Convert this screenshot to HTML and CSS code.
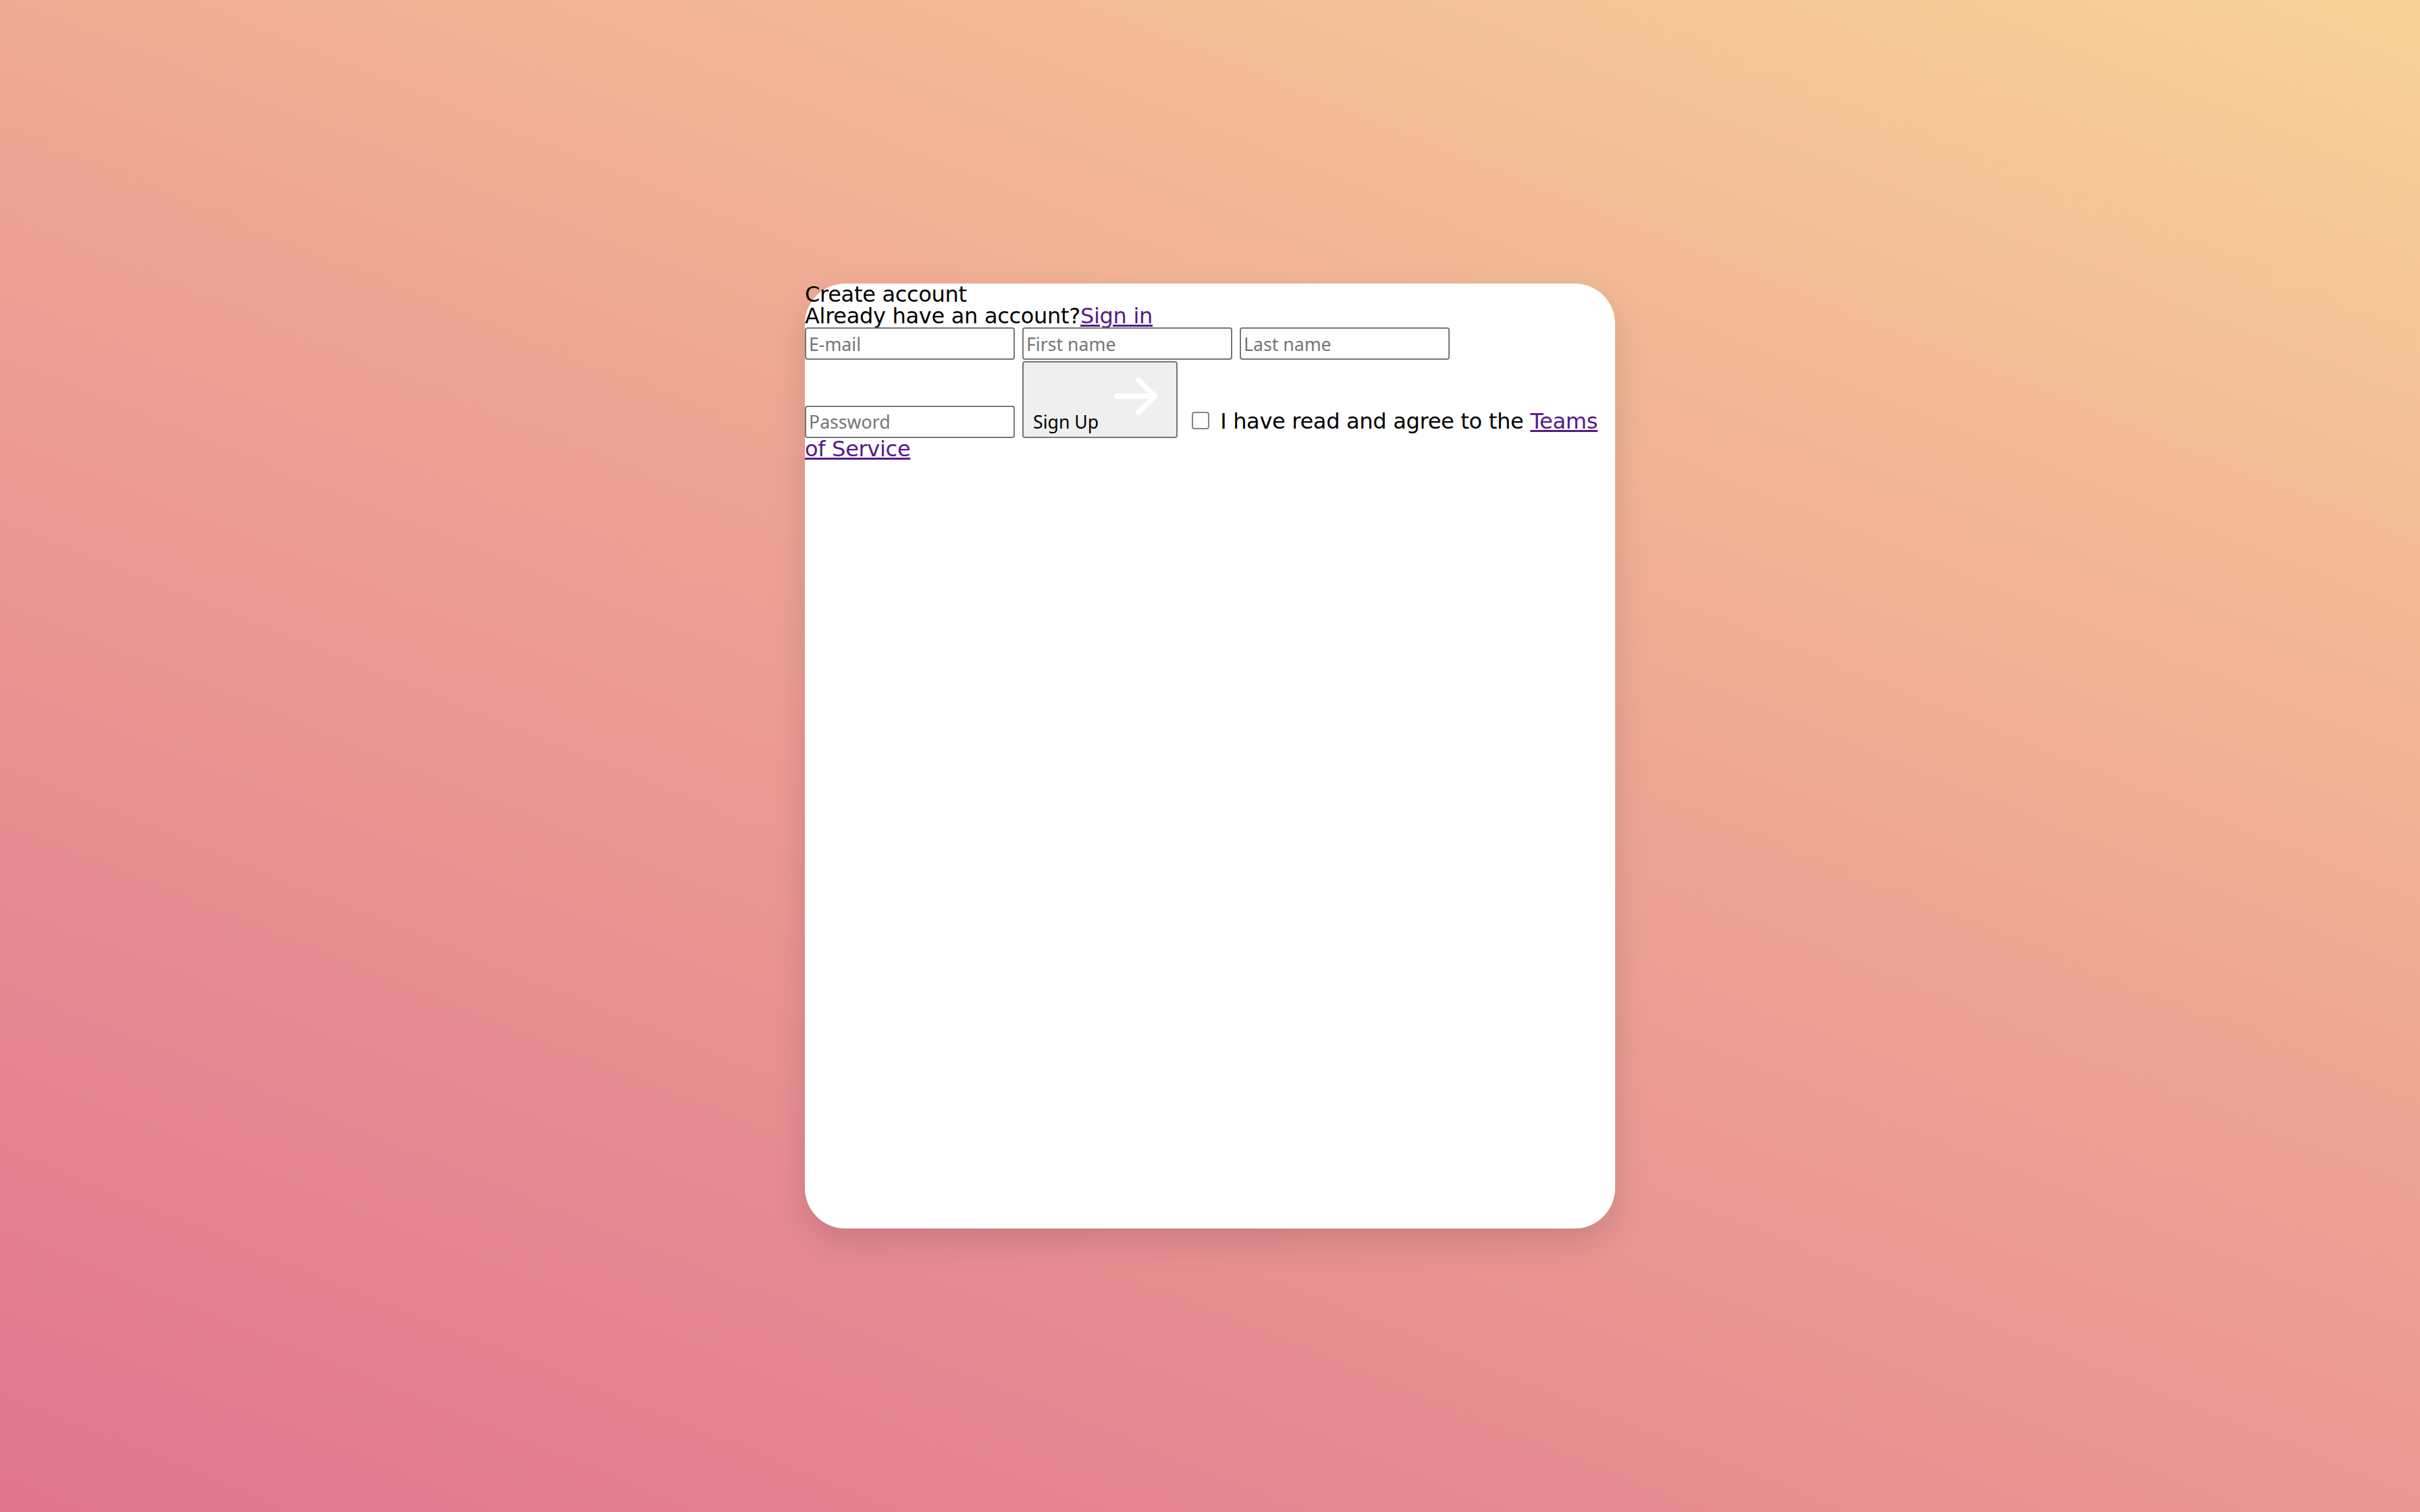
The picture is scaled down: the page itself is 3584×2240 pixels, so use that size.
FILE: index.html
```html
<!DOCTYPE html>
<html lang="en">
<head>
<meta charset="utf-8">
<title>Create account</title>
<link rel="stylesheet" href="styles.css">
</head>
<body>
<main class="page">
  <section class="card">
    <div class="title">Create account</div>
    <div class="subtitle">Already have an account?<a class="link" href="#">Sign in</a></div>
    <form class="form"><input class="field" type="email" placeholder="E-mail"><input class="field" type="text" placeholder="First name"><input class="field" type="text" placeholder="Last name"><input class="field" type="password" placeholder="Password"><button class="submit" type="button">Sign Up <svg class="arrow" viewBox="0 0 24 24" fill="none" stroke="#ffffff" stroke-width="2" stroke-linecap="round" stroke-linejoin="round"><path d="M5 12h14"/><path d="M13 18l6 -6"/><path d="M13 6l6 6"/></svg></button><input class="check" type="checkbox"><span class="terms">I have read and agree to the <a class="link" href="#">Teams of Service</a></span></form>
  </section>
</main>
</body>
</html>
```

FILE: styles.css
```css
* {
  box-sizing: border-box;
}

html,
body {
  margin: 0;
  height: 100%;
}

body {
  background: linear-gradient(22deg, #e07590 0%, #eea594 55%, #f8d298 100%);
  font-family: "DejaVu Sans", sans-serif;
}

.page {
  min-height: 100vh;
  display: flex;
  align-items: center;
  justify-content: center;
}

.card {
  width: 1200px;
  height: 1400px;
  background: #ffffff;
  border-radius: 60px;
  box-shadow: 0 20px 50px rgba(0, 0, 0, 0.13);
  font-size: 32px;
  line-height: 32px;
  letter-spacing: -0.3px;
  color: #000000;
}

.link {
  color: #551a8b;
  text-decoration: underline;
}

.form {
  margin: 0;
}

.field {
  display: inline-block;
  width: 311px;
  height: 48px;
  margin: 1px 11px 0 0;
  padding: 2px 4px;
  border: 2px solid #767676;
  border-radius: 4px;
  background: #ffffff;
  font-family: "Noto Sans", sans-serif;
  font-size: 26.67px;
  letter-spacing: 0;
  color: #000000;
  vertical-align: baseline;
}

.field::placeholder {
  color: #757575;
}

.submit {
  display: inline-block;
  margin: 2px 0 0 0;
  padding: 2px 12px 4px 14px;
  border: 2px solid #767676;
  border-radius: 4px;
  background: #efefef;
  font-family: "Noto Sans", sans-serif;
  font-size: 26.67px;
  letter-spacing: 0;
  line-height: normal;
  color: #000000;
  vertical-align: baseline;
}

.arrow {
  width: 96px;
  height: 96px;
  vertical-align: baseline;
}

.check {
  -webkit-appearance: none;
  appearance: none;
  display: inline-block;
  width: 26px;
  height: 26px;
  margin: 0 16px 0 21px;
  border: 2px solid #858585;
  border-radius: 4px;
  background: #ffffff;
  vertical-align: -1px;
}
```
